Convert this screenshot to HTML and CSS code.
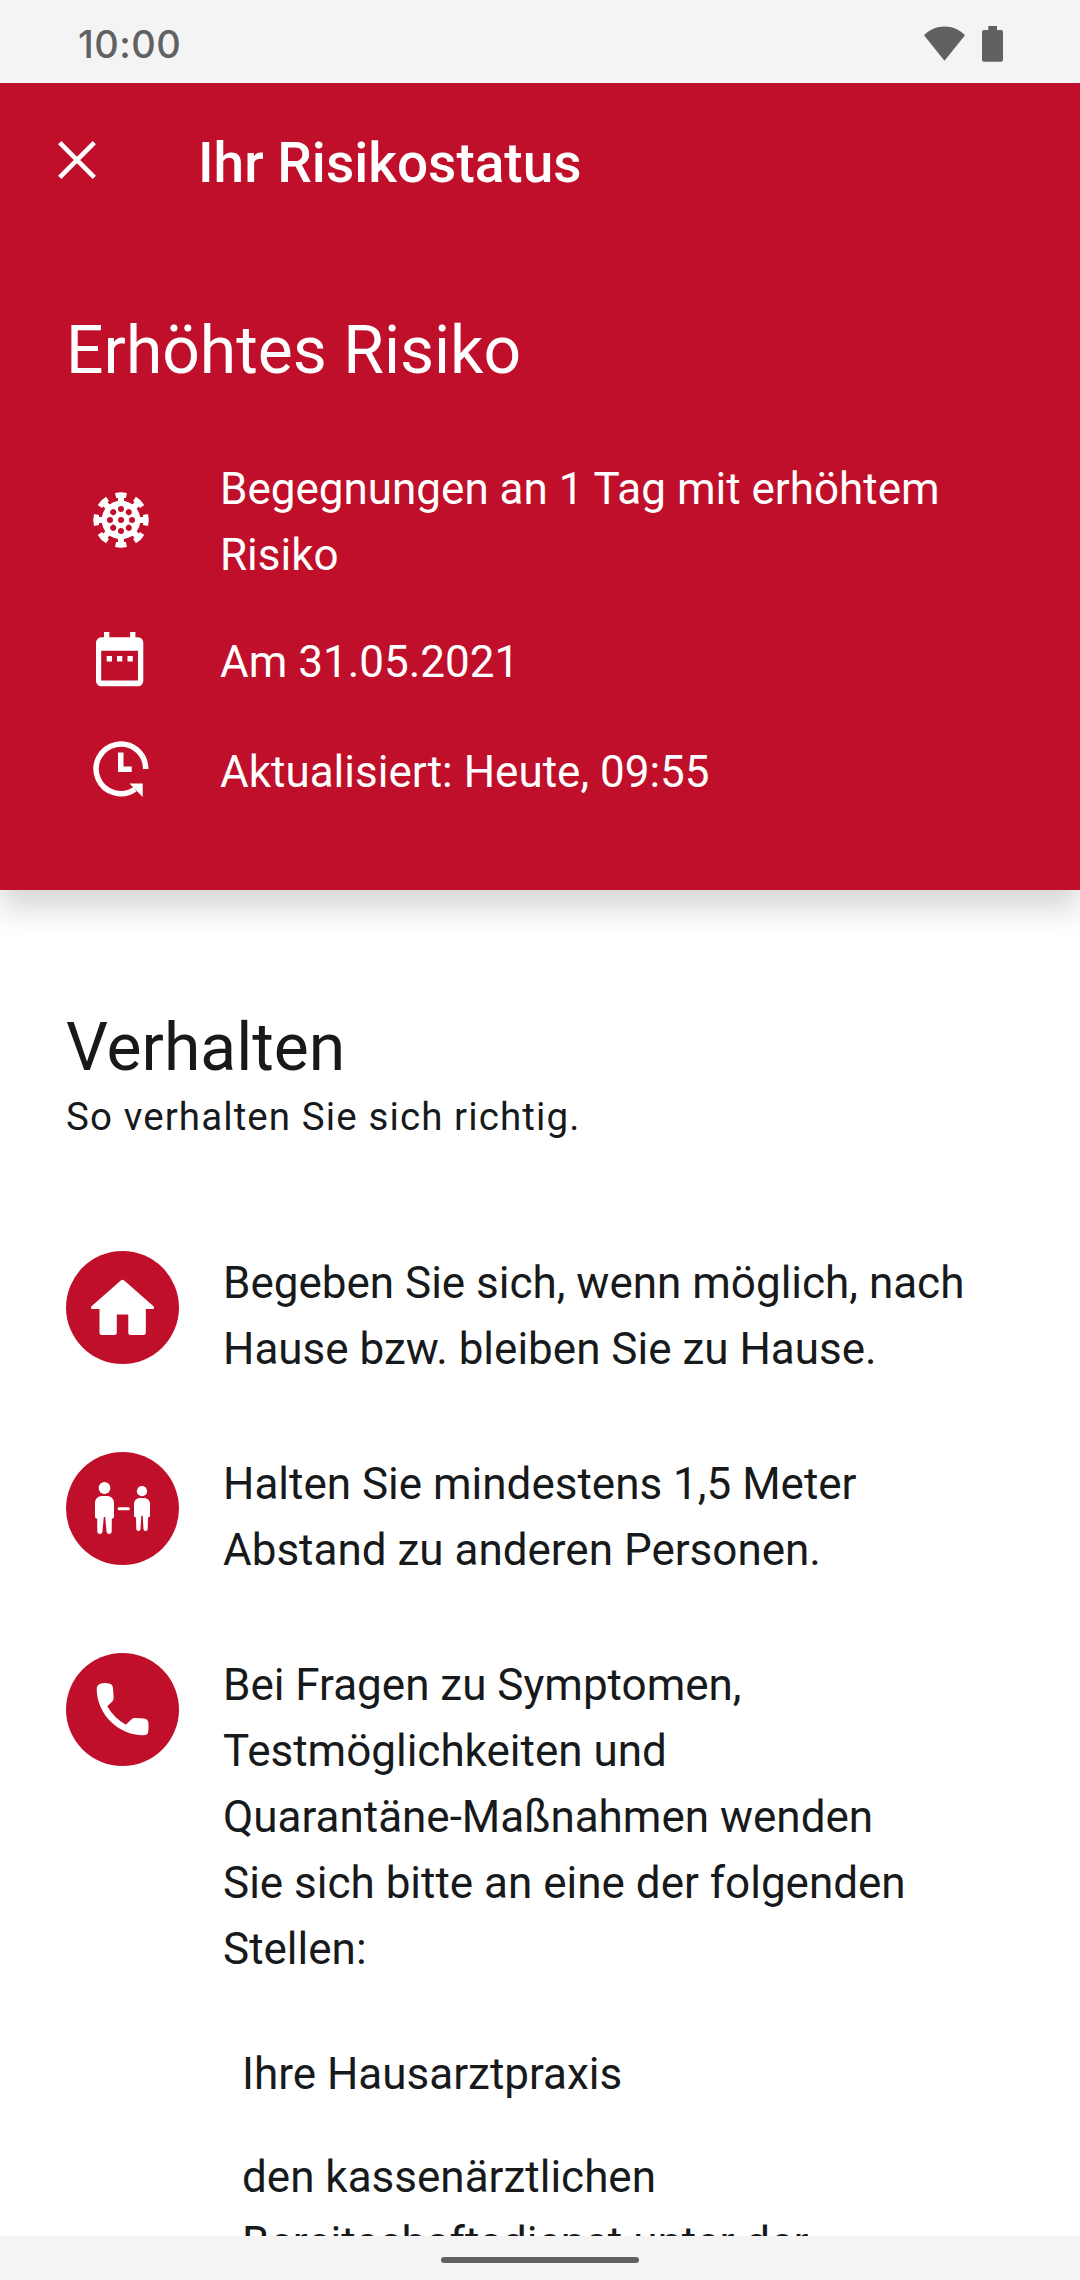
FILE: index.html
```html
<!DOCTYPE html>
<html lang="de">
<head>
<meta charset="utf-8">
<title>Ihr Risikostatus</title>
<link rel="stylesheet" href="styles.css">
</head>
<body>
<div class="screen">
  <div class="statusbar">
    <span class="time">10:00</span>
    <div class="status-icons">
      <svg width="41" height="36" viewBox="0 0 41 36"><path fill="#616161" d="M0 9.300C5.500 3.300 12.500.4 20.500.4S35.500 3.300 41 9.300L20.500 34.700z"/></svg>
      <svg width="21" height="36" viewBox="0 0 21 36"><path fill="#616161" d="M6.300 0h8.700v4H19a2 2 0 0 1 2 2v27.700a2 2 0 0 1-2 2H2a2 2 0 0 1-2-2V6a2 2 0 0 1 2-2h4.300z"/></svg>
    </div>
  </div>

  <header class="risk">
    <div class="toolbar">
      <svg width="38" height="38" viewBox="0 0 38 38"><path stroke="#fff" stroke-width="4.600" d="M1.700 1.700l34.600 34.600M36.300 1.700l-34.600 34.600"/></svg>
      <h1>Ihr Risikostatus</h1>
    </div>
    <h2 class="risk-title">Erhöhtes Risiko</h2>
    <div class="risk-row">
      <svg class="virus" width="66" height="66" viewBox="-33 -33 66 66" fill="#fff">
        <defs>
          <path id="spike" d="M-3-18V-22H-4.900L-5.900-27Q0-28.600 5.900-27L4.900-22H3V-18z"/>
          <circle id="dot" cy="-11" r="3"/>
        </defs>
        <circle r="19.300"/>
        <use href="#spike"/><use href="#spike" transform="rotate(45)"/><use href="#spike" transform="rotate(90)"/><use href="#spike" transform="rotate(135)"/>
        <use href="#spike" transform="rotate(180)"/><use href="#spike" transform="rotate(225)"/><use href="#spike" transform="rotate(270)"/><use href="#spike" transform="rotate(315)"/>
        <g fill="#c00f2a">
          <circle r="3"/>
          <use href="#dot"/><use href="#dot" transform="rotate(45)"/><use href="#dot" transform="rotate(90)"/><use href="#dot" transform="rotate(135)"/>
          <use href="#dot" transform="rotate(180)"/><use href="#dot" transform="rotate(225)"/><use href="#dot" transform="rotate(270)"/><use href="#dot" transform="rotate(315)"/>
        </g>
      </svg>
      <p>Begegnungen an 1 Tag mit erhöhtem Risiko</p>
    </div>
    <div class="risk-row date">
      <svg width="66" height="66" viewBox="0 0 66 66" fill="#fff"><path fill-rule="evenodd" d="M16 3h5.300v5.300h20.800V3h5.300v5.300h2.600a5.300 5.300 0 0 1 5.300 5.300V52a5.300 5.300 0 0 1-5.300 5.300H13.200A5.300 5.300 0 0 1 8 52V13.600a5.300 5.300 0 0 1 5.200-5.300H16zM13.200 21.800V51.500H50V21.800zM18.700 27h5.300v5.500h-5.300zM29 27h5.300v5.500H29zM39.500 27h5.300v5.500h-5.300z"/></svg>
      <p>Am 31.05.2021</p>
    </div>
    <div class="risk-row updated">
      <svg width="66" height="66" viewBox="0 0 66 66"><path fill="none" stroke="#fff" stroke-width="5.500" d="M57.700 30A24.800 24.800 0 1 0 47 50.300"/><path fill="#fff" d="M30 13.500h5.500v14h8.200v5.500H30zM41.500 44.500h13.200V58z"/></svg>
      <p>Aktualisiert: Heute, 09:55</p>
    </div>
  </header>

  <main class="content">
    <h2>Verhalten</h2>
    <p class="subtitle">So verhalten Sie sich richtig.</p>
    <section class="tips">
      <div class="tip">
        <div class="badge"><svg width="113" height="113" viewBox="0 0 113 113"><path fill="#fff" d="M54.500 29.800q2-2 4 0L87.500 55.200Q89 58 86.500 58H79.800V81.500a2.500 2.500 0 0 1-2.500 2.500H64.800a2.500 2.500 0 0 1-2.500-2.500V64.200a.8.8 0 0 0-.8-.8H51.600a.8.8 0 0 0-.8.800V81.500a2.500 2.500 0 0 1-2.500 2.500H36a2.500 2.500 0 0 1-2.500-2.500V58H26.500Q24 58 25.500 55.200z"/></svg></div>
        <p>Begeben Sie sich, wenn möglich, nach Hause bzw. bleiben Sie zu Hause.</p>
      </div>
      <div class="tip">
        <div class="badge"><svg width="113" height="113" viewBox="0 0 113 113" fill="#fff">
          <circle cx="38.500" cy="36" r="5.900"/>
          <path d="M35.500 44H41.500a6.500 6.500 0 0 1 6.500 6.500V64.500a2.200 2.200 0 0 1-2.200 2.200L45.700 80a2.600 2.600 0 0 1-5.100 0L39.200 65H37.800L36.400 80a2.600 2.600 0 0 1-5.100 0L31.200 66.700A2.200 2.200 0 0 1 29 64.500V50.500A6.500 6.500 0 0 1 35.500 44z"/>
          <rect x="51.700" y="55.200" width="12" height="3" rx="1.200"/>
          <circle cx="76" cy="39.200" r="5.100"/>
          <path d="M73.600 46H78.400a5.600 5.600 0 0 1 5.600 5.600V63.500a2 2 0 0 1-2 2L81.700 77a2.100 2.100 0 0 1-4.200 0L76.700 63.700H75.300L74.500 77a2.100 2.100 0 0 1-4.200 0L70 65.500a2 2 0 0 1-2-2V51.600A5.600 5.600 0 0 1 73.600 46z"/>
        </svg></div>
        <p>Halten Sie mindestens 1,5 Meter Abstand zu anderen Personen.</p>
      </div>
      <div class="tip">
        <div class="badge"><svg width="113" height="113" viewBox="0 0 113 113"><path fill="#fff" d="M35 30.500Q38.500 29.700 43 30.500Q46.500 31 47 35L47.700 45Q47.700 47 46.300 48.400L41.300 53.300Q48 65 59.800 71.800L65.600 66.200Q67 64.800 69 65L78 65.600Q82 66 82.400 70Q82.900 74 82.200 79Q81.600 82.300 77.500 82.300C52 82.300 31 61 30.700 36Q30.700 31.500 35 30.500z"/></svg></div>
        <div class="tip-body">
          <p>Bei Fragen zu Symptomen, Testmöglichkeiten und <span class="compound">Quarantäne-Maßnahmen</span> wenden Sie sich bitte an eine der folgenden Stellen:</p>
          <ul>
            <li>Ihre Hausarztpraxis</li>
            <li>den kassenärztlichen Bereitschaftsdienst unter der</li>
          </ul>
        </div>
      </div>
    </section>
  </main>

  <div class="navbar"><div class="pill"></div></div>
</div>
</body>
</html>
```

FILE: styles.css
```css
* { box-sizing: border-box; margin: 0; padding: 0; }

body {
  font-family: Roboto, "Liberation Sans", sans-serif;
  font-size: 44px;
  line-height: 66px;
  color: #17191a;
  background: #fff;
}

svg { display: block; flex: none; }

.screen {
  width: 1080px;
  height: 2280px;
  display: flex;
  flex-direction: column;
  overflow: hidden;
}

.statusbar {
  position: relative;
  z-index: 1;
  flex: none;
  height: 83px;
  padding: 4px 77px 0 78px;
  display: flex;
  align-items: center;
  justify-content: space-between;
  background: #f4f4f4;
}
.time {
  font: 500 38px/44px Inter, sans-serif;
  letter-spacing: .5px;
  padding-top: 1px;
  color: #616161;
}
.status-icons { display: flex; gap: 17px; }

.risk {
  flex: none;
  height: 807px;
  background: #c00f2a;
  color: #fff;
  box-shadow: 0 18px 30px rgba(0, 0, 0, .17);
}
.toolbar {
  height: 154px;
  padding-left: 58px;
  display: flex;
  align-items: center;
  gap: 102px;
}
.toolbar h1 {
  font-size: 55px;
  font-weight: 500;
  padding-top: 6px;
}
.risk h2, .content h2 {
  font-size: 66px;
  font-weight: 400;
  line-height: 78px;
}
.risk-title { margin: 75px 0 66px 66px; }
.risk-row {
  padding: 0 88px;
  display: flex;
  align-items: center;
  gap: 66px;
}
.virus { margin-top: -4px; }
.date { margin-top: 41px; }
.updated { margin-top: 44px; }

.content {
  flex: 1;
  min-height: 0;
  overflow: hidden;
  margin-top: 70px;
  padding: 49px 66px 0;
}
.subtitle {
  margin-top: 4px;
  font-size: 38.5px;
  line-height: 52px;
  letter-spacing: 1.1px;
}
.tips {
  margin-top: 107px;
  display: flex;
  flex-direction: column;
  gap: 69px;
}
.tip { display: flex; gap: 44px; }
.badge {
  flex: none;
  width: 113px;
  height: 113px;
  margin-top: 1px;
  border-radius: 50%;
  background: #c00f2a;
}
.tip p { max-width: 750px; }
.tip-body p { max-width: 700px; }
.compound { white-space: nowrap; }
.tip ul {
  list-style: none;
  margin-top: 59px;
  padding-left: 19px;
  display: flex;
  flex-direction: column;
  gap: 37px;
}
.tip li { max-width: 600px; }

.navbar {
  flex: none;
  height: 44px;
  display: flex;
  justify-content: center;
  align-items: center;
  padding-top: 4px;
  background: #f4f4f4;
}
.pill {
  width: 198px;
  height: 6px;
  border-radius: 3px;
  background: #616161;
}
```
